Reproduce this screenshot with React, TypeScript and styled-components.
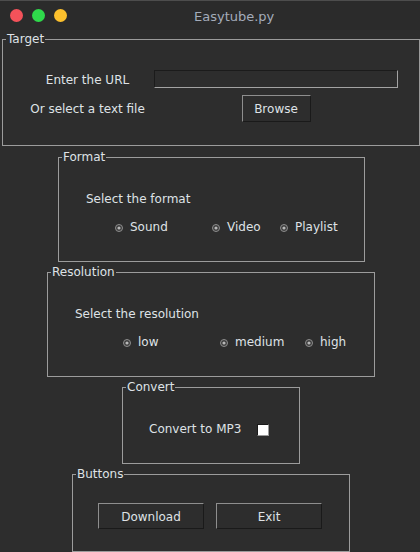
import React from "react";
import styled, { createGlobalStyle } from "styled-components";

const FONT = `"DejaVu Sans", "Liberation Sans", sans-serif`;
const TEXT = "#dfe2e6";
const BG = "#2d2d2d";

const Global = createGlobalStyle`
  html, body { margin: 0; padding: 0; background: ${BG}; }
  #root { width: 420px; height: 552px; overflow: hidden; }
  * { box-sizing: border-box; }
`;

const Window = styled.div`
  width: 420px;
  height: 552px;
  background: ${BG};
  color: ${TEXT};
  font-family: ${FONT};
  font-size: 12px;
  line-height: 15px;
  display: flex;
  flex-direction: column;
  overflow: hidden;
`;

const TitleBar = styled.header`
  flex: 0 0 30px;
  display: flex;
  align-items: center;
  background: #2b2b2b;
  border-top: 1px solid #4d4d4d;
  padding-left: 10px;
`;

const Lights = styled.div`
  display: flex;
  gap: 9px;
`;

const Light = styled.span<{ $c: string }>`
  width: 13px;
  height: 13px;
  border-radius: 50%;
  background: ${(p) => p.$c};
`;

const Title = styled.span`
  margin-left: 127px;
  padding-top: 1px;
  font-size: 13px;
  color: #a4acba;
`;

const Frame = styled.fieldset<{ $left: number; $width: number; $top: number; $pad: string }>`
  margin: ${(p) => p.$top}px 0 0 ${(p) => p.$left}px;
  width: ${(p) => p.$width}px;
  padding: ${(p) => p.$pad};
  border: 1px solid #9c9c9c;
  min-inline-size: 0;
  flex: none;
`;

const Legend = styled.legend`
  margin-left: 3px;
  padding: 0 1px;
  line-height: 15px;
  font-size: 12px;
  color: ${TEXT};
`;

const TargetGrid = styled.div`
  display: grid;
  grid-template-columns: 133px 244px;
  row-gap: 7px;
  align-items: center;
  padding-left: 18px;
`;

const FieldLabel = styled.span`
  justify-self: center;
  padding-top: 2px;
`;

const Entry = styled.input`
  display: block;
  width: 244px;
  height: 18px;
  background: ${BG};
  border-style: solid;
  border-width: 1px;
  border-color: #1b1b1b #a3a3a3 #a3a3a3 #1b1b1b;
  padding: 0 2px;
  color: ${TEXT};
  font-family: ${FONT};
  font-size: 12px;
  outline: none;
`;

const Button = styled.button<{ $w: number; $h: number }>`
  width: ${(p) => p.$w}px;
  height: ${(p) => p.$h}px;
  padding: 2px 0 0;
  background: ${BG};
  border-style: solid;
  border-width: 1px;
  border-color: #8e8e8e #1a1a1a #1a1a1a #8e8e8e;
  color: ${TEXT};
  font-family: ${FONT};
  font-size: 12px;
  line-height: 15px;
  justify-self: center;
`;

const Body = styled.div<{ $indent: number }>`
  padding-left: ${(p) => p.$indent}px;
`;

const Prompt = styled.div`
  height: 15px;
`;

const RadioRow = styled.div<{ $cols: string; $pad: number }>`
  display: grid;
  grid-template-columns: ${(p) => p.$cols};
  margin-top: 13px;
  padding-left: ${(p) => p.$pad}px;
  height: 15px;
`;

const Radio = styled.label`
  display: inline-flex;
  align-items: center;
  gap: 7px;
`;

const RadioDot = () => (
  <svg width="8" height="8" viewBox="0 0 8 8">
    <circle cx="4" cy="4" r="3.5" fill="#3a3a3a" stroke="#8f8f8f" strokeWidth="1" />
    <circle cx="4" cy="4" r="1.6" fill="#b8b8b8" />
  </svg>
);

const CheckRow = styled.div`
  display: flex;
  align-items: center;
  gap: 16px;
  height: 15px;
`;

const CheckBox = styled.span`
  width: 12px;
  height: 12px;
  background: #ffffff;
  border-style: solid;
  border-width: 1px;
  border-color: #1a1a1a #9a9a9a #9a9a9a #1a1a1a;
`;

const ButtonRow = styled.div`
  display: flex;
  gap: 12px;
`;

export default function App() {
  return (
    <>
      <Global />
      <Window>
        <TitleBar>
          <Lights>
            <Light $c="#f4525a" />
            <Light $c="#2fd94b" />
            <Light $c="#fcc02d" />
          </Lights>
          <Title>Easytube.py</Title>
        </TitleBar>

        <Frame $left={2} $width={418} $top={2} $pad="23px 0 23px 0">
          <Legend>Target</Legend>
          <TargetGrid>
            <FieldLabel>Enter the URL</FieldLabel>
            <Entry type="text" />
            <FieldLabel>Or select a text file</FieldLabel>
            <Button $w={69} $h={27}>Browse</Button>
          </TargetGrid>
        </Frame>

        <Frame $left={58} $width={307} $top={4} $pad="27px 0 26px 0">
          <Legend>Format</Legend>
          <Body $indent={27}>
            <Prompt>Select the format</Prompt>
            <RadioRow $cols="97px 68px auto" $pad={29}>
              <Radio><RadioDot />Sound</Radio>
              <Radio><RadioDot />Video</Radio>
              <Radio><RadioDot />Playlist</Radio>
            </RadioRow>
          </Body>
        </Frame>

        <Frame $left={47} $width={328} $top={3} $pad="27px 0 26px 0">
          <Legend>Resolution</Legend>
          <Body $indent={27}>
            <Prompt>Select the resolution</Prompt>
            <RadioRow $cols="97px 85px auto" $pad={48}>
              <Radio><RadioDot />low</Radio>
              <Radio><RadioDot />medium</Radio>
              <Radio><RadioDot />high</Radio>
            </RadioRow>
          </Body>
        </Frame>

        <Frame $left={122} $width={178} $top={3} $pad="27px 0 26px 0">
          <Legend>Convert</Legend>
          <Body $indent={26}>
            <CheckRow>
              <span>Convert to MP3</span>
              <CheckBox />
            </CheckRow>
          </Body>
        </Frame>

        <Frame $left={72} $width={278} $top={3} $pad="21px 0 22px 0">
          <Legend>Buttons</Legend>
          <Body $indent={25}>
            <ButtonRow>
              <Button $w={106} $h={26}>Download</Button>
              <Button $w={106} $h={26}>Exit</Button>
            </ButtonRow>
          </Body>
        </Frame>
      </Window>
    </>
  );
}
